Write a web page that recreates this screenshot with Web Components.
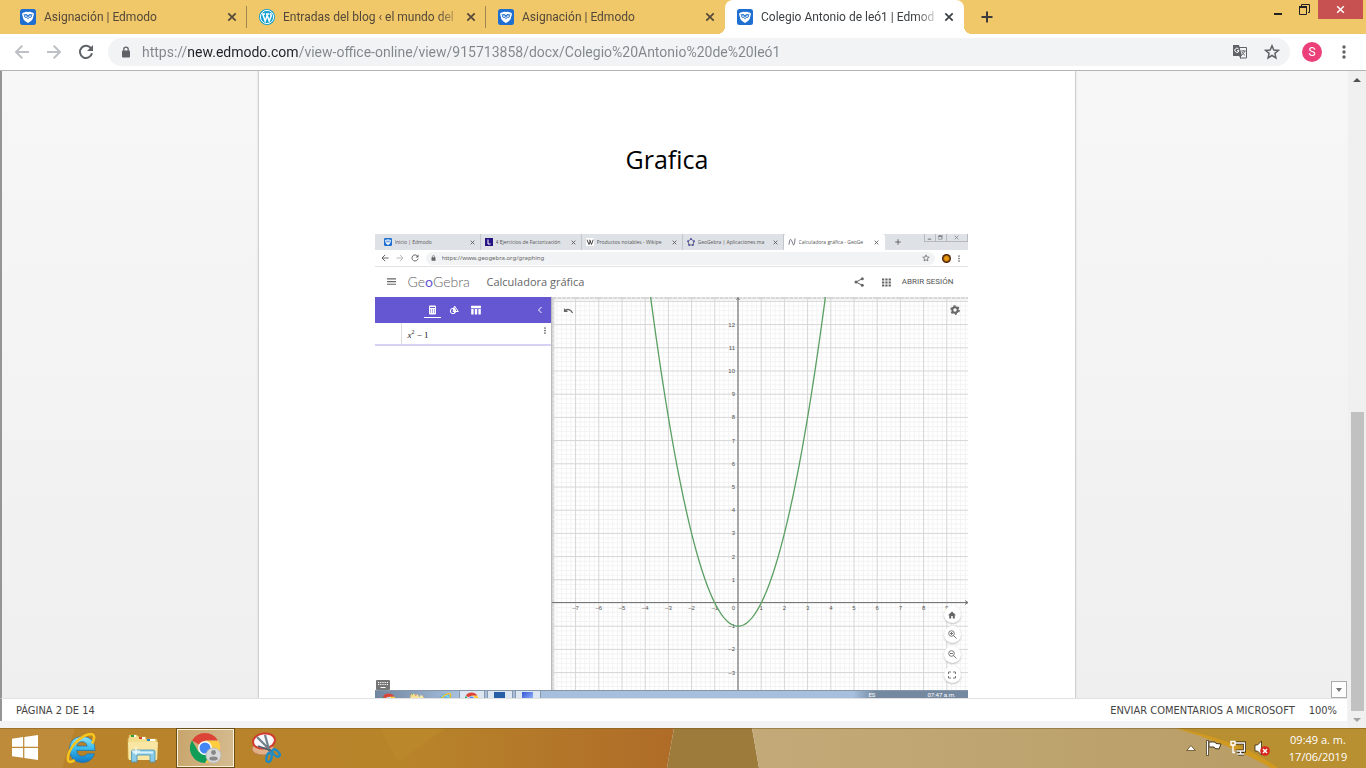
<!DOCTYPE html>
<html lang="es">
<head>
<meta charset="utf-8">
<title>Colegio Antonio de leó1 | Edmodo</title>
<style>
    html, body { height: 100%; }
    body {
        margin: 0;
        display: flex;
        flex-direction: column;
        overflow: hidden;
        background: #f3f3f5;
        font-family: Roboto, "Open Sans", sans-serif;
        font-size: 12px;
    }
    .content { flex: 1; min-height: 0; display: flex; }
    .frame { flex: 1; min-width: 0; display: flex; flex-direction: column; padding-bottom: 7px; }
</style>
</head>
<body>
<tab-strip>
    <browser-tab icon="edmodo" label="Asignación | Edmodo"></browser-tab>
    <browser-tab icon="wordpress" label="Entradas del blog ‹ el mundo del"></browser-tab>
    <browser-tab icon="edmodo" label="Asignación | Edmodo" last></browser-tab>
    <browser-tab icon="edmodo" label="Colegio Antonio de leó1 | Edmod" active></browser-tab>
</tab-strip>
<browser-toolbar></browser-toolbar>
<div class="content">
    <div class="frame">
        <doc-viewer>
            <geogebra-shot></geogebra-shot>
        </doc-viewer>
        <status-bar></status-bar>
    </div>
    <side-scrollbar></side-scrollbar>
</div>
<win-taskbar></win-taskbar>

<script>
const icons = {
    edmodo: `<svg viewBox="0 0 16 16"><rect width="16" height="16" rx="2.5" fill="#1f6fd0"/>
        <path d="M2 5Q2.200 3.300 4 3.400 6 2.400 8 3 10 2.400 12 3.400 13.800 3.300 14 5L13 8.500Q13.200 11 8 14 2.800 11 3 8.500Z" fill="#fff"/>
        <circle cx="6" cy="7" r="1.500" fill="none" stroke="#1f6fd0" stroke-width=".9"/><circle cx="10" cy="7" r="1.500" fill="none" stroke="#1f6fd0" stroke-width=".9"/>
        <path d="M3.500 5.500 8 6.500 12.500 5.500" fill="none" stroke="#1f6fd0" stroke-width=".7"/><path d="M7 8.800h2L8 10.400Z" fill="#1f6fd0"/></svg>`,
    wordpress: `<svg viewBox="0 0 16 16"><circle cx="8" cy="8" r="8" fill="#16a0d2"/><circle cx="8" cy="8" r="6.6" fill="none" stroke="#fff" stroke-width="1"/>
        <path d="M3 5h3M7 5h3.4M3.8 5.2 6.2 12 8.2 6.6M7.8 5.2 10.2 12 12.2 7 11.6 4" fill="none" stroke="#fff" stroke-width="1.5"/></svg>`,
    close: `<svg viewBox="0 0 10 10"><path d="M1.3 1.3 8.7 8.7M8.7 1.3 1.3 8.7" stroke="currentColor" stroke-width="1.7"/></svg>`,
    plus: `<svg viewBox="0 0 12 12"><path d="M6 0.5V11.5M0.5 6H11.5" stroke="currentColor" stroke-width="2"/></svg>`,
    back: `<svg viewBox="0 0 16 16"><path d="M15 8H2.5M8.3 1.7 2 8l6.3 6.3" fill="none" stroke="currentColor" stroke-width="2"/></svg>`,
    forward: `<svg viewBox="0 0 16 16"><path d="M1 8h12.5M7.7 1.7 14 8l-6.3 6.3" fill="none" stroke="currentColor" stroke-width="2"/></svg>`,
    reload: `<svg viewBox="0 0 16 16"><path d="M13.2 4.6A6.1 6.1 0 1 0 14 9.3" fill="none" stroke="currentColor" stroke-width="2"/><path d="M15 1v6H9Z" fill="currentColor"/></svg>`,
    lock: `<svg viewBox="0 0 10 12"><rect x="1" y="4.5" width="8" height="7" rx="1" fill="currentColor"/><path d="M2.8 5V3.3a2.2 2.2 0 0 1 4.4 0V5" fill="none" stroke="currentColor" stroke-width="1.3"/></svg>`,
    translate: `<svg viewBox="0 0 16 16"><path d="M6 3.5h8.5v10.5H8" fill="none" stroke="#5f6368"/><path d="M1 1h6l3 11H1Z" fill="#5f6368"/>
        <path d="M6.6 5A2.1 2.1 0 1 0 7 6.7H5" fill="none" stroke="#fff" stroke-width="1"/><path d="M9.2 7h4.6M11.3 6v1M12.7 7Q12 9.5 9.8 11.2M10 8Q11 10 13 11.4" fill="none" stroke="#5f6368" stroke-width=".9"/><path d="M7 12l2 3v-3Z" fill="#5f6368"/></svg>`,
    star: `<svg viewBox="0 0 16 16"><path d="M8 1.8 9.8 6l4.6.4-3.5 3 1 4.5L8 11.5l-3.9 2.4 1-4.5-3.5-3L6.2 6Z" fill="none" stroke="currentColor" stroke-width="1.5"/></svg>`,
    dots: `<svg viewBox="0 0 4 14"><circle cx="2" cy="2" r="1.7" fill="currentColor"/><circle cx="2" cy="7" r="1.7" fill="currentColor"/><circle cx="2" cy="12" r="1.7" fill="currentColor"/></svg>`,
    minimize: `<svg viewBox="0 0 12 12"><path d="M2 10h8" stroke="#222" stroke-width="2"/></svg>`,
    restore: `<svg viewBox="0 0 12 12"><path d="M3.500 2V.5h8v8H10" fill="none" stroke="#222"/><path d="M1.500 2.500h7v8h-7z" fill="none" stroke="#222"/><path d="M1 3h8" stroke="#222" stroke-width="2"/></svg>`,
    menu: `<svg viewBox="0 0 10 8"><path d="M0 1h10M0 4h10M0 7h10" stroke="currentColor" stroke-width="1.2"/></svg>`,
    share: `<svg viewBox="0 0 10 10"><path d="M8.300 1.700 2 5l6.300 3.300" fill="none" stroke="currentColor"/><circle cx="8.300" cy="1.700" r="1.500" fill="currentColor"/><circle cx="2" cy="5" r="1.500" fill="currentColor"/><circle cx="8.300" cy="8.300" r="1.500" fill="currentColor"/></svg>`,
    grid: `<svg viewBox="0 0 9 9"><path d="M0 1.500h9M0 4.500h9M0 7.500h9" stroke="currentColor" stroke-width="2" stroke-dasharray="2.300 1"/></svg>`,
    calc: `<svg viewBox="0 0 9 10"><rect x="1" y=".5" width="7" height="9" rx="1" fill="#fff"/><path d="M2 2.500h5" stroke="#6557d2" stroke-width="1"/><path d="M2 5h5M2 7h5" stroke="#6557d2" stroke-dasharray="1 1"/></svg>`,
    tools: `<svg viewBox="0 0 10 10"><path d="M5.500 1 9.300 6.500H4Z" fill="none" stroke="#fff"/><circle cx="4" cy="6" r="2.700" fill="none" stroke="#fff"/><path d="M5.500 3v5" stroke="#fff"/></svg>`,
    table: `<svg viewBox="0 0 10 10"><path d="M0 2h10" stroke="#fff" stroke-width="2.500"/><path d="M1.400 4v5.500M5 4v5.500M8.600 4v5.500" stroke="#fff" stroke-width="2.400"/></svg>`,
    chevron: `<svg viewBox="0 0 6 8"><path d="M4.500 1 1.500 4l3 3" fill="none" stroke="#fff"/></svg>`,
    undo: `<svg viewBox="0 0 12 8"><path d="M2 4Q7 .5 10.500 6.500" fill="none" stroke="#666" stroke-width="1.400"/><path d="M1 1v4.500h4.500Z" fill="#666"/></svg>`,
    gear: `<svg viewBox="0 0 10 10"><circle cx="5" cy="5" r="2.700" fill="none" stroke="#666" stroke-width="1.900"/><circle cx="5" cy="5" r="4.100" fill="none" stroke="#666" stroke-width="1.500" stroke-dasharray="2.150 2.150"/></svg>`,
    home: `<svg viewBox="0 0 8 8"><path d="M4 .5 8 4.300H6.800V7.500H4.800V5H3.200v2.500H1.200V4.300H0Z" fill="#666"/></svg>`,
    zoomin: `<svg viewBox="0 0 9 9"><circle cx="3.500" cy="3.500" r="2.800" fill="none" stroke="#777"/><path d="M5.500 5.500 8.500 8.500M2 3.500h3M3.500 2v3" stroke="#777"/></svg>`,
    zoomout: `<svg viewBox="0 0 9 9"><circle cx="3.500" cy="3.500" r="2.800" fill="none" stroke="#777"/><path d="M5.500 5.500 8.500 8.500M2 3.500h3" stroke="#777"/></svg>`,
    full: `<svg viewBox="0 0 8 8"><path d="M.5 3V1H3M5 1h2.500v2M7.500 5v2H5M3 7H.5V5" fill="none" stroke="#777"/></svg>`,
    keyboard: `<svg viewBox="0 0 14 10"><rect width="14" height="10" rx="1" fill="#757575"/><path d="M2 2.500h10M2 4.500h10" stroke="#fff" stroke-dasharray="1 .8"/><path d="M4.500 7.500h5" stroke="#fff"/></svg>`,
    lbox: `<svg viewBox="0 0 8 8"><rect width="8" height="8" fill="#251383"/><path d="M3 1.500V6h2.500" fill="none" stroke="#fff"/></svg>`,
    wiki: `<svg viewBox="0 0 8 8"><rect width="8" height="8" fill="#fff"/><path d="M1 1.700 3 6.500 4.500 2.500M3.500 1.700 5.500 6.500 7.200 1.700" fill="none" stroke="#333" stroke-width=".9"/></svg>`,
    penta: `<svg viewBox="0 0 8 8"><path d="M4 1 7 3.300 5.900 7H2.100L1 3.300Z" fill="none" stroke="#667"/><path d="M4 1h0M7 3.300h0M5.900 7h0M2.100 7h0M1 3.300h0" stroke="#55a" stroke-width="2" stroke-linecap="round"/></svg>`,
    wave: `<svg viewBox="0 0 9 8"><path d="M1 7.500Q2 1 3 1.500T5.500 6.500 8 .5" fill="none" stroke="#667"/></svg>`,
    windows: `<svg viewBox="0 0 28 26"><path d="M0 3.800 11.500 2.200V12.300H0ZM12.800 2 27 0V12.300H12.800ZM0 13.600H11.500V23.600L0 22ZM12.800 13.600H27V26L12.800 23.900Z" fill="#fff"/></svg>`,
    ie: `<svg viewBox="0 0 32 32"><defs><linearGradient id="g" x2="0" y2="1"><stop offset="0" stop-color="#8fe4fb"/><stop offset=".5" stop-color="#35b7ea"/><stop offset="1" stop-color="#1177c4"/></linearGradient></defs>
        <path d="M30 18H11q.5 6 6 6 3.500 0 4.800-2.500h7.500Q26.500 30.500 17 30.500 4 30 3.500 17 4 4 17 3.500 30 4 30 18ZM11.200 13.500h10.600Q21 9 16.500 9T11.200 13.500Z" fill="url(#g)" stroke="#1a6fae" stroke-width=".7"/>
        <path d="M27 11Q32 1 25 1 17 2 8 12 0 23 2.500 29 4.500 31 9 28" fill="none" stroke="#f7c51e" stroke-width="2.600"/></svg>`,
    folder: `<svg viewBox="0 0 32 30"><path d="M2 5V2h8l2 2h7v2h11v20H1V5Z" fill="#f4dd8d" stroke="#c9a64a" stroke-width=".8"/>
        <path d="M4 3h5M12 5h6M20 7h8" stroke="#fff" stroke-width="2"/><path d="M4 3h3" stroke="#2ca02c" stroke-width="2"/><path d="M12 5h3" stroke="#d3421f" stroke-width="2"/><path d="M20 7h3" stroke="#2783c8" stroke-width="2"/>
        <path d="M1 9h30l-1 18H2Z" fill="#f8e6a2"/><path d="M4.500 29V18.500q0-1.500 1.500-1.500h20.500q1.500 0 1.500 1.500V29h-5v-7H10v7Z" fill="#8acbe8" stroke="#4a92b8" stroke-width=".8"/><path d="M6 19.500h20" stroke="#d8f2fc" stroke-width="2"/><path d="M9 14v8M5 18h8" stroke="#fff"/></svg>`,
    chrome: `<svg viewBox="0 0 32 32"><path d="M15 16 2 8.500A15 15 0 0 1 28 8.500H15Z" fill="#db4437"/><path d="M15 16 28 8.500A15 15 0 0 1 15 31L21.500 19.700Z" fill="#ffcd40"/><path d="M15 16 21.500 19.700 15 31A15 15 0 0 1 2 8.500L8.500 19.700Z" fill="#0f9d58"/>
        <path d="M15 8.800H28.100Q30 12 30 16H15Z" fill="#ffcd40"/><circle cx="15" cy="16" r="7" fill="#fff"/><circle cx="15" cy="16" r="5.500" fill="#4285f4"/>
        <circle cx="23.500" cy="23.500" r="7.500" fill="#d8d8d8" stroke="#bbb"/><circle cx="23.500" cy="20.500" r="2.400" fill="#888"/><ellipse cx="23.500" cy="26.500" rx="4.200" ry="2" fill="#888"/></svg>`,
    snip: `<svg viewBox="0 0 32 32"><ellipse cx="12" cy="17" rx="11" ry="6" fill="#e2b088" stroke="#c08058"/><ellipse cx="13" cy="9" rx="11" ry="7.500" transform="rotate(-8 13 9)" fill="#f8f8fa" stroke="#d23b31" stroke-width="2"/>
        <path d="M6 5 21 20M14 3l5 18" stroke="#70808c" stroke-width="2.200"/><path d="M7 14l14 5" stroke="#4e6474" stroke-width="1.600"/>
        <ellipse cx="18" cy="25.500" rx="2.500" ry="4.500" transform="rotate(12 18 25.500)" fill="none" stroke="#1d8cc6" stroke-width="2.400"/><ellipse cx="25" cy="21" rx="2.500" ry="4.500" transform="rotate(-45 25 21)" fill="none" stroke="#1d8cc6" stroke-width="2.400"/></svg>`,
    trayup: `<svg viewBox="0 0 10 6"><path d="M5 .5 9.300 5.500H.7Z" fill="#fff" stroke="#5d4a20" stroke-width=".8"/></svg>`,
    flag: `<svg viewBox="0 0 16 16"><path d="M1.500 .5v15" stroke="#33260a" stroke-width="3"/><path d="M3 2h6l1 1.500 5 .5-2 5-4-.5-1-1.500H3Z" fill="#fff" stroke="#33260a" stroke-width=".9"/><path d="M1.500 1v14" stroke="#fff" stroke-width="1.500"/></svg>`,
    network: `<svg viewBox="0 0 16 16"><path d="M5.500 3h9v8h-8M8 14h6M10.500 11v3" fill="none" stroke="#33260a" stroke-width="3"/><path d="M5.500 3h9v8h-8M7.500 14h6.500M10.500 11v3M1 1.500h4v3.500H1ZM3 5v7.500h2" fill="none" stroke="#fff" stroke-width="1.400"/></svg>`,
    volume: `<svg viewBox="0 0 16 16"><path d="M1 5h2.500L7.500 1v14L3.500 11H1Z" fill="#fff" stroke="#33260a" stroke-width=".8"/><circle cx="11" cy="11" r="4.800" fill="#d8261c"/><path d="m9 9 4 4m0-4-4 4" stroke="#fff" stroke-width="1.500"/></svg>`
};

function define(name, render, setup) {
    customElements.define(name, class extends HTMLElement {
        constructor() {
            super();
            this.attachShadow({ mode: 'open' });
        }
        connectedCallback() {
            this.shadowRoot.innerHTML = render(this);
            if (setup) setup(this);
        }
    });
}

const resetButton = `button { border: 0; padding: 0; margin: 0; background: none; color: inherit; font: inherit; display: flex; align-items: center; justify-content: center; }`;

// <g-icon name="star" size="16"></g-icon>
define('g-icon', el => `
    <style>
        :host { display: block; flex: none; width: ${el.getAttribute('size') || 16}px; }
        svg { display: block; width: 100%; }
    </style>
    ${icons[el.getAttribute('name')]}
`);

define('browser-tab', el => `
    <style>
        ${resetButton}
        :host {
            flex: 0 1 239px;
            min-width: 0;
            box-sizing: border-box;
            display: flex;
            align-items: center;
            padding: 0 9px 0 12px;
            color: #54483a;
            border-right: 1px solid transparent;
            border-image: linear-gradient(transparent 7px, #9d8651 7px, #9d8651 27px, transparent 27px) 1;
            position: relative;
        }
        :host([last]) { border-image: none; }
        :host([active]) { background: #fff; border-radius: 8px 8px 0 0; border-image: none; color: #3c4043; }
        :host([active])::before, :host([active])::after {
            content: "";
            position: absolute;
            bottom: 0;
            width: 8px;
            height: 8px;
        }
        :host([active])::before { left: -8px; background: radial-gradient(circle at 0 0, transparent 8px, #fff 8px); }
        :host([active])::after { right: -9px; background: radial-gradient(circle at 100% 0, transparent 8px, #fff 8px); }
        .label {
            flex: 1;
            min-width: 0;
            margin: 0 4px 0 8px;
            overflow: hidden;
            white-space: nowrap;
            line-height: 18px;
            -webkit-mask-image: linear-gradient(to right, #000 155px, transparent 180px);
        }
    </style>
    <g-icon name="${el.getAttribute('icon')}" size="16"></g-icon>
    <span class="label">${el.getAttribute('label')}</span>
    <button aria-label="Cerrar"><g-icon name="close" size="10"></g-icon></button>
`);

define('tab-strip', () => `
    <style>
        ${resetButton}
        :host { display: flex; height: 34px; background: #f0c869; padding-left: 8px; }
        .new { width: 46px; color: #3c3c3c; }
        .window { margin-left: auto; padding-right: 3px; display: flex; height: 19px; }
        .window button { width: 26px; }
        .window button.close { width: 45px; margin-left: 1px; background: #c75050; color: #fff; }
    </style>
    <slot></slot>
    <button class="new" aria-label="Nueva pestaña"><g-icon name="plus" size="12"></g-icon></button>
    <div class="window">
        <button aria-label="Minimizar"><g-icon name="minimize" size="12"></g-icon></button>
        <button aria-label="Restaurar"><g-icon name="restore" size="12"></g-icon></button>
        <button class="close" aria-label="Cerrar"><g-icon name="close" size="9"></g-icon></button>
    </div>
`);

define('browser-toolbar', () => `
    <style>
        ${resetButton}
        :host { display: flex; align-items: center; height: 36px; background: #fff; border-bottom: 1px solid #b4b4b4; color: #5f6368; }
        nav { display: flex; gap: 16px; padding: 0 14px; }
        nav .off { color: #bdc1c6; }
        .address {
            flex: 1;
            display: flex;
            align-items: center;
            height: 28px;
            border-radius: 14px;
            background: #f1f3f4;
            padding: 0 10px 0 13px;
        }
        input {
            flex: 1;
            min-width: 0;
            border: 0;
            outline: 0;
            padding: 0;
            margin: 0 16px 0 11px;
            font: 14px/20px Roboto, sans-serif;
            color: #80868b;
            /* the host name is darker than the rest of the address */
            background: linear-gradient(to right, #80868b 45px, #202124 45px, #202124 157px, #80868b 157px);
            -webkit-background-clip: text;
            background-clip: text;
            -webkit-text-fill-color: transparent;
        }
        .address button + button { margin-left: 16px; }
        .avatar { width: 20px; height: 20px; border-radius: 10px; background: #ec407a; color: #fff; font: 12px/20px Roboto, sans-serif; margin-left: 12px; }
        .menu { width: 44px; }
    </style>
    <nav>
        <button class="off" aria-label="Atrás"><g-icon name="back" size="16"></g-icon></button>
        <button class="off" aria-label="Adelante"><g-icon name="forward" size="16"></g-icon></button>
        <button aria-label="Recargar"><g-icon name="reload" size="16"></g-icon></button>
    </nav>
    <div class="address">
        <g-icon name="lock" size="10"></g-icon>
        <input type="text" aria-label="Dirección" value="https://new.edmodo.com/view-office-online/view/915713858/docx/Colegio%20Antonio%20de%20leó1">
        <button aria-label="Traducir"><g-icon name="translate" size="16"></g-icon></button>
        <button aria-label="Marcador"><g-icon name="star" size="16"></g-icon></button>
    </div>
    <button class="avatar">S</button>
    <button class="menu" aria-label="Menú"><g-icon name="dots" size="4"></g-icon></button>
`);

define('doc-viewer', () => `
    <style>
        ${resetButton}
        :host {
            flex: 1;
            min-height: 0;
            overflow: hidden;
            display: flex;
            justify-content: center;
            align-items: flex-start;
            border-left: 2px solid #959595;
            padding-right: 16px;
            background: linear-gradient(#f7f7f7, #efefef);
            position: relative;
        }
        .page {
            width: 816px;
            min-height: 100%;
            box-sizing: content-box;
            background: #fff;
            border: 1px solid #d0d0d0;
            border-width: 0 1px;
            box-shadow: 0 0 2px #ddd;
            display: flex;
            flex-direction: column;
            align-items: center;
        }
        h1 { margin: 71px 0 57px; font: 25px/35px "Open Sans", sans-serif; color: #000; }
        .shot { padding-left: 8px; }
        .down { position: absolute; right: 1px; bottom: 0; width: 16px; height: 17px; border: 1px solid #ababab; background: #fdfdfd; }
        .down i { border: 3px solid transparent; border-top: 4px solid #777; border-bottom: 0; }
    </style>
    <div class="page">
        <h1>Grafica</h1>
        <div class="shot"><slot></slot></div>
    </div>
    <button class="down" aria-label="Página siguiente"><i></i></button>
`);

define('mini-tab', el => `
    <style>
        :host { flex: 0 0 101px; min-width: 0; box-sizing: border-box; display: flex; align-items: center; padding: 0 5px 0 4px; border-right: 1px solid #c4c8cd; color: #555; font: 5px/8px "Open Sans", sans-serif; }
        :host([active]) { background: #fff; border-right-color: #fff; border-radius: 3px 3px 0 0; }
        span { flex: 1; min-width: 0; margin: 0 2px 0 3px; overflow: hidden; white-space: nowrap; }
    </style>
    <g-icon name="${el.getAttribute('icon')}" size="8"></g-icon>
    <span>${el.getAttribute('label')}</span>
    <g-icon name="close" size="5"></g-icon>
`);

define('geogebra-shot', () => `
    <style>
        ${resetButton}
        :host { display: block; width: 593px; font: 6px/8px Roboto, "Liberation Sans", sans-serif; color: #666; }
        .tabs { display: flex; height: 16px; background: #dee1e6; padding-left: 5px; }
        .tabs .new { margin: 5px 0 0 10px; }
        .win { margin-left: auto; width: 44px; height: 8px; display: flex; border: 1px solid #aaa; border-top: 0; box-sizing: border-box; opacity: 0.7; }
        .win i { flex: 1; border-right: 1px solid #aaa; display: flex; align-items: center; justify-content: center; }
        .win i:last-child { flex: 2; border: 0; }
        .bar { display: flex; align-items: center; height: 17px; gap: 7px; padding: 0 8px 0 6px; background: #fff; box-sizing: border-box; border-bottom: 1px solid #e2e2e2; }
        .bar .url { flex: 1; display: flex; align-items: center; gap: 6px; height: 13px; border-radius: 7px; background: #f1f3f4; padding: 0 5px; color: #666; }
        .bar input { flex: 1; min-width: 0; border: 0; padding: 0; background: none; font-family: "Noto Sans", sans-serif; font-size: 6px; line-height: 8px; color: inherit; }
        .me { width: 9px; height: 9px; border-radius: 5px; background: radial-gradient(#e79a10 30%, #4a1c06 60%); }
        header { display: flex; align-items: center; height: 30px; padding: 0 14px 0 12px; background: #fff; color: #666; }
        .logo { margin-left: 12px; width: 79px; font: 300 14px/20px Lato, sans-serif; color: #666; }
        .logo b { font-weight: 400; color: #6557d2; }
        .name { flex: 1; font: 11px/16px "Open Sans", sans-serif; }
        header button { font-size: 8px; margin-left: 11px; color: #555; }
        .main { display: flex; height: 393px; }
        .panel { flex: 0 0 177px; box-sizing: border-box; background: #fff; border-right: 1px solid #bbb; display: flex; flex-direction: column; }
        .modes { display: flex; align-items: center; gap: 12px; height: 26px; padding: 0 8px 0 49px; background: #6557d2; }
        .modes .on { border-bottom: 1px solid #fff; width: 17px; height: 16px; margin-right: -4px; }
        .modes button:last-child { margin-left: auto; }
        .row { display: flex; height: 21px; border-bottom: 2px solid #d6d1f3; }
        .row .num { width: 26px; border-right: 1px solid #ddd; }
        .row .expr { flex: 1; padding: 6px; font: 9px/12px "Liberation Serif", serif; color: #222; }
        .row .expr sup { font-size: 6px; line-height: 0; }
        .row g-icon { margin: 4px 5px; color: #555; }
        .keys { margin: auto 0 0 1px; }
        graph-view { flex: 1; }
        .bottom { display: flex; height: 18px; background: #a5bfdd; border-top: 1px solid #8697aa; box-sizing: border-box; }
        .bottom .start { width: 84px; display: flex; gap: 14px; padding: 2px 7px; box-sizing: border-box; background: linear-gradient(to right, #71859f, #a5bfdd); }
        .bottom .app { width: 26px; margin-right: 2px; background: #dce6f2; border: 1px solid #8798ad; border-top: 0; box-sizing: border-box; display: flex; justify-content: center; padding-top: 1px; }
        .bottom .sq { width: 11px; height: 11px; background: linear-gradient(135deg, #3657d8, #a3c4ff); }
        .bottom .w { background: #285ea8; }
        .bottom .tray { margin-left: auto; width: 115px; display: flex; justify-content: flex-end; gap: 52px; padding: 0 12px; box-sizing: border-box; background: linear-gradient(to right, #a5bfdd, #74889f 20%); color: #fff; }
        .tray span { white-space: nowrap; }
    </style>
    <div class="tabs">
        <mini-tab icon="edmodo" label="Inicio | Edmodo"></mini-tab>
        <mini-tab icon="lbox" label="4 Ejercicios de Factorización"></mini-tab>
        <mini-tab icon="wiki" label="Productos notables - Wikipe"></mini-tab>
        <mini-tab icon="penta" label="GeoGebra | Aplicaciones ma"></mini-tab>
        <mini-tab icon="wave" label="Calculadora gráfica - GeoGe" active></mini-tab>
        <g-icon class="new" name="plus" size="6"></g-icon>
        <div class="win"><i><g-icon name="minimize" size="5"></g-icon></i><i><g-icon name="restore" size="5"></g-icon></i><i><g-icon name="close" size="5"></g-icon></i></div>
    </div>
    <div class="bar">
        <g-icon name="back" size="8"></g-icon>
        <g-icon name="forward" size="8" style="color: #bbb"></g-icon>
        <g-icon name="reload" size="8"></g-icon>
        <div class="url">
            <g-icon name="lock" size="5"></g-icon>
            <input type="text" aria-label="Dirección" value="https://www.geogebra.org/graphing">
            <g-icon name="star" size="8"></g-icon>
        </div>
        <span class="me"></span>
        <g-icon name="dots" size="2"></g-icon>
    </div>
    <header>
        <g-icon name="menu" size="9"></g-icon>
        <span class="logo">Ge<b>o</b>Gebra</span>
        <span class="name">Calculadora gráfica</span>
        <g-icon name="share" size="10"></g-icon>
        <g-icon name="grid" size="9" style="margin-left: 18px"></g-icon>
        <button>ABRIR SESIÓN</button>
    </header>
    <div class="main">
        <div class="panel">
            <div class="modes">
                <button class="on" aria-label="Álgebra"><g-icon name="calc" size="9"></g-icon></button>
                <button aria-label="Herramientas"><g-icon name="tools" size="10"></g-icon></button>
                <button aria-label="Tabla"><g-icon name="table" size="10"></g-icon></button>
                <button aria-label="Ocultar"><g-icon name="chevron" size="6"></g-icon></button>
            </div>
            <div class="row">
                <span class="num"></span>
                <span class="expr"><i>x</i><sup>2</sup> − 1</span>
                <g-icon name="dots" size="2"></g-icon>
            </div>
            <g-icon class="keys" name="keyboard" size="14"></g-icon>
        </div>
        <graph-view></graph-view>
    </div>
    <div class="bottom">
        <div class="start"><g-icon name="chrome" size="14"></g-icon><g-icon name="folder" size="14"></g-icon><g-icon name="ie" size="14"></g-icon></div>
        <div class="app"><g-icon name="chrome" size="14"></g-icon></div>
        <div class="app"><span class="sq w"></span></div>
        <div class="app"><span class="sq"></span></div>
        <div class="tray"><span>ES</span><span>07:47 a.m.</span></div>
    </div>
`);

// Plot of x² − 1 with a labelled grid. Origin and unit are in drawing units.
define('graph-view', () => `
    <style>
        ${resetButton}
        :host { display: block; position: relative; min-width: 0; background: #fff; box-shadow: inset 2px 2px 2px #ccc; }
        svg { display: block; width: 100%; }
        text { font: 6px "Liberation Sans", sans-serif; fill: #555; }
        .undo { position: absolute; left: 11px; top: 10px; }
        .gear { position: absolute; right: 8px; top: 8px; }
        .tools { position: absolute; right: 7px; bottom: 7px; display: flex; flex-direction: column; gap: 3px; }
        .tools button { width: 17px; height: 17px; border-radius: 9px; background: #fff; box-shadow: 0 1px 2px #bbb; }
    </style>
    <svg viewBox="0 0 416 393"></svg>
    <g-icon class="undo" name="undo" size="11"></g-icon>
    <g-icon class="gear" name="gear" size="10"></g-icon>
    <div class="tools">
        <button aria-label="Inicio"><g-icon name="home" size="8"></g-icon></button>
        <button aria-label="Acercar"><g-icon name="zoomin" size="9"></g-icon></button>
        <button aria-label="Alejar"><g-icon name="zoomout" size="9"></g-icon></button>
        <button aria-label="Pantalla completa"><g-icon name="full" size="8"></g-icon></button>
    </div>
`, el => {
    const ox = 186, oy = 306, unit = 23.2;
    const px = x => (ox + x * unit).toFixed(2);
    const py = y => (oy - y * unit).toFixed(2);
    let minor = '', major = '', labels = '';

    for (let i = -40; i <= 66; i++) {
        const v = `M${px(i / 5)} 0V393`;
        const h = `M0 ${py(i / 5)}H416`;
        if (i % 5 === 0) major += v + h;
        else minor += v + h;
    }
    for (let x = -7; x <= 9; x++) {
        if (x === 0) continue;
        labels += `<text x="${px(x)}" y="313" text-anchor="middle">${x < 0 ? '–' + -x : x}</text>`;
    }
    labels += `<text x="183" y="313" text-anchor="end">0</text>`;
    for (let y = -3; y <= 12; y++) {
        if (y === 0) continue;
        labels += `<text x="183" y="${+py(y) + 2}" text-anchor="end">${y < 0 ? '–' + -y : y}</text>`;
    }

    let curve = '';
    for (let x = -3.8; x <= 3.81; x += 0.05) {
        curve += `${curve ? 'L' : 'M'}${px(x)} ${py(x * x - 1)}`;
    }

    el.shadowRoot.querySelector('svg').innerHTML = `
        <path d="${minor}" stroke="#f3f3f3" />
        <path d="${major}" stroke="#d6d6d6" />
        <path d="M186 0V393" stroke="#a8a8a8" stroke-width="2" />
        <path d="M0 305.5H416" stroke="#777" />
        <path d="M413 303.500 416 305.500 413 307.500M184.500 3 186 1 187.500 3" fill="none" stroke="#777" />
        ${labels}
        <path d="${curve}" fill="none" stroke="#5a9f62" stroke-width="1.300" />`;
});

define('status-bar', () => `
    <style>
        ${resetButton}
        :host {
            display: flex;
            align-items: center;
            gap: 14px;
            height: 21px;
            padding: 1px 10px 0 14px;
            margin-right: 1px;
            border-left: 2px solid #959595;
            border-top: 1px solid #e1e1e1;
            background: #fff;
            color: #444;
            font: 11px/16px "DejaVu Sans Condensed", sans-serif;
        }
        .page { margin-right: auto; }
    </style>
    <span class="page">PÁGINA 2 DE 14</span>
    <button>ENVIAR COMENTARIOS A MICROSOFT</button>
    <button>100%</button>
`);

define('side-scrollbar', () => `
    <style>
        ${resetButton}
        :host { display: flex; flex-direction: column; width: 18px; background: #f0f0f0; }
        button { height: 17px; }
        i { border: 4px solid transparent; }
        .up i { border-bottom-color: #505050; border-top: 0; }
        .down i { border-top-color: #a3a3a3; border-bottom: 0; }
        .track { flex: 1; display: flex; flex-direction: column; justify-content: flex-end; padding: 0 2px 0 3px; }
        .thumb { height: 48%; background: #c1c1c1; }
    </style>
    <button class="up" aria-label="Subir"><i></i></button>
    <div class="track"><div class="thumb"></div></div>
    <button class="down" aria-label="Bajar"><i></i></button>
`);

define('win-taskbar', () => `
    <style>
        ${resetButton}
        :host { display: flex; height: 40px; position: relative; color: #fff; }
        .wall { position: absolute; width: 100%; height: 100%; z-index: -1; }
        .start { width: 50px; }
        .app { width: 62px; }
        .app.on { margin: 0 1px 0 2px; width: 59px; box-sizing: border-box; border: 1px solid #6e4c16; box-shadow: inset 0 0 0 1px #fff3d8; background: linear-gradient(100deg, #c8a46a, #d5bc92); }
        .tray { margin-left: auto; display: flex; align-items: center; gap: 8px; }
        .more { margin-right: 2px; }
        time { width: 96px; margin-left: -8px; text-align: center; font: 11px/17px "Open Sans", sans-serif; }
    </style>
    <svg class="wall" viewBox="0 0 1366 40" preserveAspectRatio="none">
        <defs>
            <linearGradient id="a"><stop offset="0" stop-color="#b8822b"/><stop offset=".6" stop-color="#b8842a"/><stop offset="1" stop-color="#af6c28"/></linearGradient>
            <linearGradient id="b"><stop offset="0" stop-color="#c2aa78"/><stop offset="1" stop-color="#b89b64"/></linearGradient>
        </defs>
        <path d="M0 0H674L667 40H0Z" fill="url(#a)"/>
        <path d="M0 0H75L62 40H0Z" fill="#be8b3a"/>
        <path d="M380 0H446L398 34Z" fill="#ba872a"/>
        <path d="M674 0H752L759 40H667Z" fill="#9c7b3b"/>
        <path d="M752 0H1366V40H759Z" fill="url(#b)"/>
        <path d="M1175 0Q1240 14 1271 40H1366V0Z" fill="#b88f31"/>
        <path d="M1175 0Q1240 12 1278 40H1271Q1230 16 1175 0Z" fill="#d0991f"/>
        <path d="M0 .5H1366" stroke="#7a5a20" stroke-opacity=".5"/>
    </svg>
    <button class="start" aria-label="Inicio"><g-icon name="windows" size="27"></g-icon></button>
    <button class="app" aria-label="Internet Explorer"><g-icon name="ie" size="31"></g-icon></button>
    <button class="app" aria-label="Explorador"><g-icon name="folder" size="32"></g-icon></button>
    <button class="app on" aria-label="Chrome"><g-icon name="chrome" size="32"></g-icon></button>
    <button class="app" aria-label="Recortes"><g-icon name="snip" size="32"></g-icon></button>
    <div class="tray">
        <g-icon class="more" name="trayup" size="10"></g-icon>
        <g-icon name="flag" size="16"></g-icon>
        <g-icon name="network" size="16"></g-icon>
        <g-icon name="volume" size="16"></g-icon>
        <time>09:49 a. m.<br>17/06/2019</time>
    </div>
`);
</script>
</body>
</html>
